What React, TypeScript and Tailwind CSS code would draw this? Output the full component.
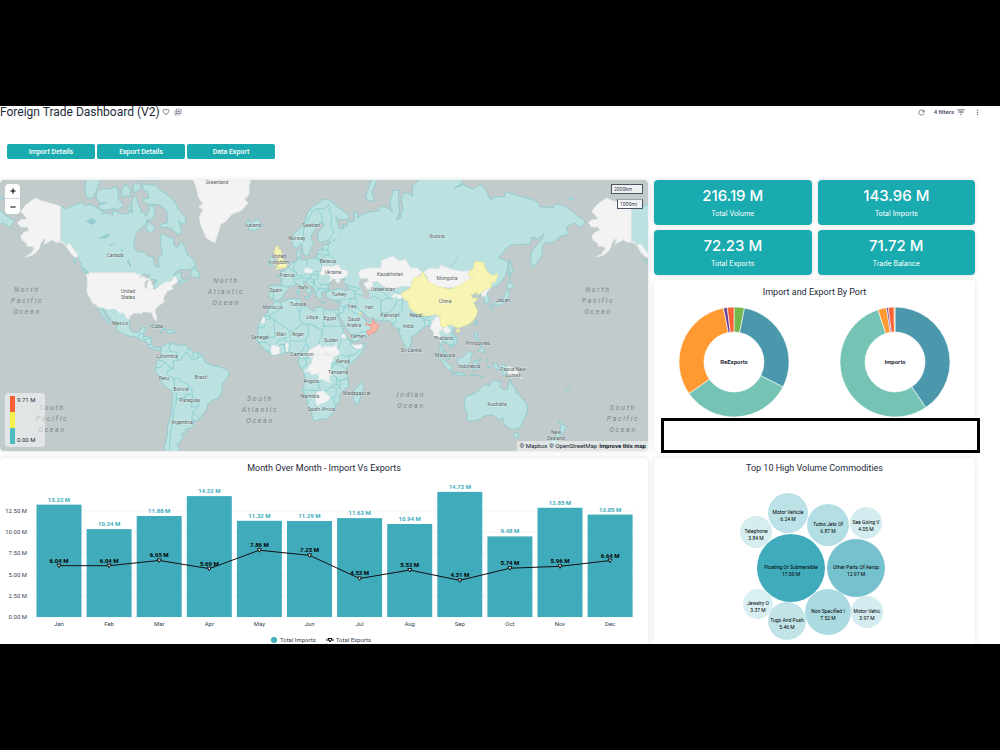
import { FaMinus, FaPlus } from "react-icons/fa"
import {
  MdFavoriteBorder,
  MdFilterList,
  MdMoreVert,
  MdOutlineLibraryAdd,
  MdRefresh,
} from "react-icons/md"

/* ---------- World map ---------- */

const WORLD_WIDTH = 571
const LON_ZERO_X = 284
const EQUATOR_Y = 182

// Web Mercator, "lon,lat lon,lat ..." -> svg path
function toPath(coords: string, close = true) {
  const points = coords.split(" ").map((pair) => {
    const [lon, lat] = pair.split(",").map(Number)
    const x = LON_ZERO_X + (lon * WORLD_WIDTH) / 360
    const rad = (lat * Math.PI) / 180
    const y = EQUATOR_Y - (WORLD_WIDTH / (2 * Math.PI)) * Math.log(Math.tan(Math.PI / 4 + rad / 2))
    return `${x.toFixed(1)} ${y.toFixed(1)}`
  })
  return `M${points.join("L")}${close ? "Z" : ""}`
}

const land = [
  // Canada
  "-141,69.6 -137,69 -134,69.6 -130,70 -128,70.5 -125,69.5 -124,70 -121,69.8 -117,69 -114,68.3 -115,67.9 -110,68 -108,67.5 -108,68.6 -104,68 -101,67.8 -98,67.8 -97,68.5 -95.5,68 -96,70 -95,71.8 -93,71.5 -92,70 -90,69 -90.5,68.5 -88,68 -87,67.3 -85,68.8 -85,69.7 -82,69.6 -81.3,68.5 -82.5,67 -84,66.3 -86.5,66.4 -87,65.3 -90,64.2 -93,63 -94,61 -94.7,59.5 -94.7,58.5 -92.5,57 -88.5,56.7 -85,55.3 -82.3,55 -82,53 -80.5,51.3 -79,51.2 -78.8,52.5 -79.5,54.5 -77,56 -76.7,57.5 -78.3,59 -77.5,60.5 -78,62.4 -75,62.3 -72,61.5 -69.6,61 -69.5,59 -67,58.4 -65.5,60 -64.3,60.3 -62.5,58.3 -61.5,57 -61,55.8 -58,54.7 -56,53 -56,51.6 -59,50.4 -62,50.2 -66,50.2 -68,49.3 -70,47.5 -66.5,49.1 -64.3,49 -65,47.8 -64.8,46.5 -63,45.8 -61.3,45.9 -60,46.8 -60,45.9 -63.5,44.6 -65.8,43.5 -66.2,44.3 -64.5,45.5 -67,45.2 -67.8,47 -69.2,47.4 -71,45.3 -74.7,45 -76.5,44.1 -79,43.4 -79,42.8 -82.5,41.8 -82.4,43 -81.6,43.6 -81.7,45.2 -80,44.6 -80.5,45.8 -84,46.2 -84.8,46.8 -85,47.9 -88.4,48.4 -89.6,48 -93,48.6 -95.1,49.3 -95.2,49 -123,49 -125,50.2 -127.5,51.5 -128,53 -130,54.5 -130,55.9 -132,57 -134,59 -135.5,59.7 -137.5,58.9 -139,60.1 -141,60.3",
  "-125,72 -123,71.2 -120,71.5 -117.5,73.5 -115,75.2 -124,75.2 -125.5,73.5",
  "-118.5,71.5 -116,70.2 -112,70.4 -117,69.7 -116,68.9 -113,68.6 -108,69 -104,68.9 -101,69.8 -104.5,71 -104.5,72.5 -106,73.5 -110,73 -114,73.2 -118,72.5",
  "-102,71.4 -99,71.8 -97,71.5 -97,73.2 -100,73.9 -102.5,72.8",
  "-95,72.3 -93,72.6 -90.2,73.2 -91,74 -95,74",
  "-99,69 -97,69.8 -96,69 -98,68.6",
  "-89,73.9 -81,73.7 -78,72.8 -75,72.3 -71,71.3 -68,70 -66.5,68.7 -62,67 -62,65.9 -64.5,65.2 -66.5,66.2 -65,64.5 -64.8,62.8 -66.5,62.3 -71.5,64.2 -75,64.4 -78,64.3 -77.5,65.3 -73.8,65.5 -73,67.5 -74,68.5 -77,69.5 -79.5,70 -85,70 -89,70.5 -88.5,71.2 -85,71.3 -86,72.5 -89,73",
  "-86,65.9 -84,65.5 -81,64 -84,62.9 -87,63.6",
  "-92,74.7 -80,74.6 -80,76 -92,76",
  "-110,74.9 -104,75 -104,76 -110,76",
  "-59.3,47.7 -57.5,50.5 -55.6,51.5 -55.5,50 -53.5,49 -53,46.8 -55.8,47",
  "-128,50.8 -125,49.8 -123.5,48.4 -126,49.2",
  "-133,54 -131.6,54 -131.5,52.5",
  // Mexico and Central America
  "-117.1,32.6 -114.8,32.5 -111,31.3 -106.5,31.8 -104.7,30.2 -103.2,29 -101.5,29.8 -99.3,26.7 -97.2,26 -97.8,22.5 -97.2,20.5 -95.8,18.9 -94.4,18.2 -92,18.6 -90.6,19.6 -90.3,21 -87,21.5 -87.5,19.5 -88.2,18 -88.6,15.9 -86,15.9 -83.3,15 -83.6,12.5 -83.7,11 -82,9 -79.8,9.5 -77.5,8.5 -78,7.4 -80.3,7.4 -81,8 -83,8.3 -85.7,10 -86,11.5 -87.6,13 -90,13.7 -92.3,14.6 -94.5,16.2 -96.5,15.7 -99.5,16.7 -102,18 -104.5,19.2 -105.6,20.5 -105.4,22 -106.8,23.8 -109,25.6 -109.8,27 -112,28.8 -113.1,31.2 -114.8,31.7 -113,28.8 -111,26 -109.5,23.3 -110,22.9 -112,24.8 -112.2,26 -114,27 -115,28 -115.8,30.2",
  "-84.8,22 -82,23.1 -77.5,21.5 -74.3,20.2 -77.5,19.9 -78.3,20.8 -82,22.5",
  "-74.3,18.4 -72.8,19.9 -69,19.3 -68.5,18.4 -71.5,17.8",
  "-78.3,18.4 -76.3,18.1 -77.5,17.8",
  // South America
  "-77.5,8.5 -75.5,10.7 -74.8,11.1 -72,12 -71.5,10.9 -70,12 -68,10.6 -62,10.7 -61,9.5 -60,8.5 -57.5,6.3 -54,5.9 -51.7,4.2 -50,1.2 -50,0 -48,-1 -44.5,-2.4 -41.5,-2.9 -38.5,-3.8 -35.5,-5.3 -34.8,-7.5 -35.3,-9.3 -37.2,-11.5 -38.8,-13 -39,-17 -40,-20 -41,-22 -44.5,-23.1 -48,-25.5 -48.7,-28.4 -51,-31 -53.5,-34 -55,-34.8 -58,-34.2 -57,-36.3 -58,-38.2 -62,-39 -62.2,-40.8 -65,-41 -63.7,-42.6 -65.3,-44.5 -67.5,-46.2 -65.8,-47.8 -69,-51 -74,-51 -75.5,-47 -73.5,-42 -73.5,-38 -71.5,-32.5 -70.5,-26 -70.2,-19 -71.5,-17.5 -75.8,-14.8 -77.2,-12 -79,-8.3 -81.2,-6 -80.2,-3.3 -80.9,-2 -80,0.5 -78.8,1.7 -77.2,4 -77.5,6.7",
  // Iceland, Ireland
  "-24,65.6 -22.5,66.4 -22,65.6 -20.5,65.8 -16,66.5 -13.7,65 -15,64.3 -18.7,63.4 -22.6,63.9 -21.8,64.5",
  "-10,52 -6.4,52.2 -6,54 -7.5,55.3 -10,54",
  // Eurasia
  "-9.3,38.7 -8.8,41.8 -9.2,43.2 -3.8,43.5 -1.6,43.4 -1.2,46 -2.5,47.3 -4.6,48 -1.6,48.7 -1.6,49.7 0.2,49.5 1.6,50.6 3.5,51.5 4.7,53 7,53.5 8.7,53.9 8.2,55.5 8.2,57 10.5,57.7 10.3,56.2 10,54.5 11,54.1 14,54 18.5,54.7 21,55.3 21,56.8 22.5,57.7 24.3,57.2 24,58.8 28,59.5 30,59.9 28,60.6 23,59.9 21.4,60.8 21.5,63 25.2,65 24,65.8 22,65.6 21,64.6 17.5,62.3 17.2,60.8 18.8,60 16.5,57.5 15.8,56.1 14.2,55.4 12.8,55.5 11.2,58.8 10.5,59.3 8,58.1 5.6,58.8 5,61 6,62.5 10,64 13,66 15,68.2 19,69.8 21,70 24,71 28,71 31,70.3 33,69.5 37,68.7 41,67.5 41,66.5 35,66.4 32.5,67 34.5,65 35,64 38,64 37,65.2 40,64.6 40.5,66 44,66 44.5,68.3 43.5,68.6 46.5,68 46,66.8 50,67.8 54,68.3 60,68.6 61,69.7 65,69.2 68.5,68.3 67,69.7 67,71 69,72.8 72.5,72.8 72,71 73,68.5 71,66.3 73.5,66.8 74,68.2 75,69 74,71 75,72.2 78,72.3 81,71.7 81,73.5 87,75.2 98,76 113,76 112,74 107,73.2 113,73.8 119,73 124,73.8 127,73 130,71 133,71.5 139,71.6 140,72.5 150,71.5 159,70.8 161,69.5 170,69.2 171,70 176,69.8 180,68.9 185,67.3 190,66 187,64.4 183,65.5 180,65 178,64.5 179.5,62.5 174,61.8 170,60 165,60 163,58.7 162.5,57 163,56 160,53.2 156.8,51 155.6,54 156,57 160,59.5 163,61.5 164,62.6 160,61 156.5,61.7 155,59.3 148,59.4 142,59 135.2,54.8 139,54 141.3,53 140.5,50 140,48 135.5,43.8 133,42.8 130.7,42.3 127.5,40 129.4,37 129,35.2 126.5,34.4 126.5,37 125,38 125,39.8 121.3,39 122,40.5 119,39.2 117.8,38.7 119,37.3 122.5,37.2 119.5,35 121,32.5 121.8,31 121.5,28.5 119.5,25.5 117,23.5 113.5,22.2 110.3,21 108,21.6 106,19.5 106.5,17.8 109,14.5 109,11.7 106.8,10.5 105,8.7 104.8,10.4 102.8,11.5 101,12.8 100,13.4 99.2,10.5 100.5,7.2 102.5,6 103.5,3.5 104.1,1.4 101.3,3 100.3,6 98.3,8 98.5,11 97.6,16.3 95.3,15.8 94.2,16.2 94.5,18.3 92.3,20.8 91.8,22.5 89,21.8 87,21 86.5,20 82.3,16.7 80.2,15.5 80.2,13 79.8,10.3 78,8.3 77.5,8 76.3,10 74.8,13 73,17.5 72.7,20.8 70.5,20.8 69,22.3 68.3,23.6 66.6,25.2 61.7,25.1 57.3,25.8 56.5,27 54.7,26.5 51.5,27.8 50,30.2 48,30 48.5,28.3 50,26.6 51.3,26 51.5,24.5 54,24.1 56.2,26 56.8,24.3 59.8,22.5 57.8,19 55.2,17.5 52,15.6 45,12.8 43.4,12.8 42.7,16.4 39,21 37,24.8 34.6,28 35,29.5 34.2,31.3 35.5,34 36,36.3 34,36.3 32,36.1 30.5,36.7 28,36.8 26.7,38.4 26.3,40 29,41 31.3,41.3 35,42 38.5,41 41.5,41.5 39,44 37.5,45 38.5,46.5 35,46.2 35.2,45.2 33.5,44.5 33,46 30.8,46.4 28.7,44.2 27.7,42.5 28.7,41.2 26,40.8 23.5,40.3 24,38 22.8,36.5 21.3,37.5 19.4,40.5 19.5,41.8 16,43.4 13.7,45.2 12.3,45.3 12.5,44 14,42.5 16,41.8 18.4,40.1 16.9,40.4 16.5,38.9 15.8,38 15.6,40 12.3,41.7 10.4,43 8.8,44.4 6,43.1 3.2,43.2 3.1,41.8 -0.3,39.3 -0.6,37.7 -2.2,36.8 -5.5,36 -6.5,37 -8.9,37",
  "51.5,71.5 53,70.8 57,70.7 55.5,72.5 60,75.5 56,75.2 53,73",
  "178.5,71 181,71.5 183,71.2 180,70.9",
  "142,54.2 143.2,52 144.5,49 143,49.3 142.8,47 142,46 142,50",
  "131,34.3 135.5,35.7 138.5,37.5 140,40.5 141.5,41.3 142,39.5 140.8,36 138.5,34.7 135.8,33.6 132.5,34.2",
  "140.2,42 141.7,45.4 145.3,43.3 143,42",
  "130,33.5 131.8,33.5 131,31.2 130,32",
  "12.6,38 15.5,38.2 15,36.8",
  "8.4,41 9.5,43 9.7,41 9.5,39.2 8.4,39",
  "23.6,35.4 26.3,35.2 24,35",
  "32.4,35 34.3,35.6 33,34.6",
  "80,9.7 81.8,7.5 80.5,6 79.8,8",
  "121,25 122,25 120.8,22",
  // Africa
  "-5.9,35.8 -2,35.1 3,36.9 10,37.3 11,35.5 10,34 15,32.4 19,30.3 20,32.5 23,32.6 29,30.9 32.5,31.2 34.2,31.3 34.9,29.5 34.2,27.9 32.7,29.8 33.7,27.3 35.5,24 37.2,21 37.4,18.7 39.5,15.5 43,12.5 43.2,11.5 45,10.5 51.2,11.9 50.5,9 47.5,4 43.5,0.5 40,-2.7 39,-5.5 39.5,-8.5 40.5,-11 40.7,-15 36.5,-18.5 34.8,-20 35.5,-23.5 32.8,-26 32.5,-28.5 30.5,-31 27,-33.7 22,-34.1 20,-34.8 18.4,-34 17,-29.5 15,-26.5 14.5,-22.7 11.8,-17.5 13.8,-11 12.3,-6 9,-1 9.7,4 8.5,4.6 6,4.3 4.3,6.3 1,6 -2,4.8 -7.5,4.4 -11,6.7 -13.3,9 -15,11 -16.8,13.2 -17.4,14.7 -16.3,17 -16.3,19.5 -17,21 -14.5,26 -13,27.8 -10,29.5 -9.8,31.5 -8,33.4 -6.5,34.5",
  "49.3,-12 50.5,-15.5 49,-19 47,-25 45,-25.5 43.5,-22.5 44.5,-19.5 44,-17 46.5,-15.7",
  // South-east Asia
  "120.5,18.5 122.2,18.4 121.5,15.5 124,13 121,13.8 120,16",
  "122,7 125.5,9.7 126.3,7 125.4,5.8",
  "123,10.8 125,12 124,10",
  "109,1.5 111.5,2.5 115,5 117,7 119,5.2 117.8,3 118,1 116.3,-1.5 116,-4 112,-3.3 110,-1.3",
  "95.3,5.6 98,4 103.5,-1 106,-3 105.8,-5.8 102.3,-4 98.8,1.7",
  "105.2,-6.8 108.5,-6.8 111,-6.5 114.4,-7.7 114.3,-8.6 108,-7.8",
  "119.5,-5.5 119,-2.5 120,1 124.8,1.5 121,0.4 121.5,-1 123.3,-1 121.8,-2 122.5,-4.5 121,-2.8 120.3,-5.5",
  "117,-8.4 122.5,-8.3 119,-8.9",
  "124,-10 127,-8.5 124.5,-9.2",
  "128,2 128.7,0.5 127.8,-0.5",
  "128,-3 130.5,-3.2 128.5,-3.4",
  "131,-0.8 134,-0.9 135,-3.3 137.8,-1.6 141,-2.6 141,-9.1 138,-8.3 138,-5.5 133,-4 132.5,-2.8",
  // Oceania
  "114,-22 113.5,-26 115,-30 115.7,-32 115.1,-34.3 118,-35 123.5,-33.9 126,-32.3 131,-31.5 134,-32.8 135.7,-34.8 138,-32.8 138.2,-35.5 140,-37.8 143.5,-38.7 146.4,-39 150,-37.5 151,-34 153,-31 153.5,-28 153,-25.5 150.8,-23.3 149,-20.8 146.3,-18.9 145.3,-15.5 143.8,-14.4 142.5,-10.8 141.6,-13.5 141,-17.2 139.5,-17.5 136,-15.5 136.9,-12.2 132.6,-11.4 130.7,-12.5 129.7,-15 127,-14 124.3,-16 122.2,-18 119,-20 116,-20.8",
  "144.8,-40.8 148.3,-41 147,-43.5 145.5,-42.8",
  "173,-34.6 175.5,-36.6 178.4,-37.7 177,-39.5 175.3,-41.5 173.9,-39.3 174.8,-37.5",
  "172.7,-40.6 174.2,-41.7 172.8,-43.8 170.5,-45.9 168.5,-46.6 166.6,-45.9 170.8,-43",
  "177.5,-17.5 179,-17 181,-16.2 178.5,-18.2",
]

// Countries without trade data
const noData = [
  // Alaska
  "-141,69.6 -145,70 -150,70.5 -154,70.9 -156.6,71.3 -160,70.6 -163,69.8 -166,68.4 -164,67.6 -162,66.5 -166,66.4 -168,65.6 -166,64.5 -161.5,64.5 -161,63.5 -164,63 -166,61.8 -165,60.6 -162.5,59.8 -162,58.7 -158.5,58.7 -157.5,57.8 -160,56 -163.5,55 -159,55.6 -156,56.8 -154,58.2 -153.5,59.5 -151.8,60.8 -150,61.2 -151.5,59.3 -149,60 -146,60.8 -144,60 -141,60 -139,59.6 -136.8,58.3 -134.5,56.4 -132,55 -130.2,55 -130,56 -132,57.2 -134,59 -135.5,59.7 -137.5,58.9 -139,60.2 -141,60.3",
  // United States
  "-123,49 -95.2,49 -95.1,49.3 -93,48.6 -89.6,48 -92,46.7 -88,47.3 -87.5,46.5 -84.6,46.5 -84,46 -87,45.6 -88,44.3 -87.7,42 -86.3,42 -86.4,43.8 -85,45.6 -83.5,45.2 -83.5,44 -82.4,43 -83.2,42 -81.5,41.5 -79,42.7 -79,43.3 -76.5,44 -74.7,45 -71,45.3 -69.2,47.4 -67.8,47 -67,44.9 -70,43.7 -70.8,42.5 -70,41.8 -74,40.7 -74.3,39.5 -75.5,38.5 -76,37 -75.6,35.3 -77.5,34.3 -79,33.3 -81.2,31.6 -81.2,29.5 -80.1,27 -80.4,25.3 -81.7,26 -82.7,28 -83.8,30 -85.5,29.8 -88.5,30.3 -89.5,29.2 -91.5,29.5 -94.5,29.5 -97.2,27.8 -97.2,26 -99.3,26.7 -101.5,29.8 -103.2,29 -104.7,30.2 -106.5,31.8 -111,31.3 -114.8,32.5 -117.1,32.6 -118.5,34 -120.6,34.6 -122,36.8 -123.8,39.3 -124.3,41 -124,44 -124,46.5 -124.6,48.3 -123,48.3",
  // Greenland
  "-57,75.8 -57,74.5 -55,73 -54,71.5 -51,70 -54,69.5 -51,68.8 -53.5,67 -52.5,65 -51,63.5 -49,61.3 -46,60.5 -43.5,59.9 -42.5,61.5 -41,63.5 -40,65.2 -37,65.8 -33,67.7 -27,68.6 -22.5,70.3 -25,71 -22,72 -22,73.5 -20,75.8",
  // Africa
  "12.5,-5.9 16.5,-5.9 17,-8 21.8,-7.3 22,-11 24,-11 27,-12 29.5,-13.3 29.5,-12.2 28.4,-12 28.7,-8.5 30.5,-8.3 29.4,-6 29.2,-3 29.6,-1 31,2 30.8,3.5 28,4.4 25,5 22.5,4.1 19,5 18.5,3.5 17.5,-0.5 16,-2.3 14.5,-4.9",
  "14.5,5 16,7.5 19,9 22.5,11 24,8.7 27.4,5 25,5 22.5,4.1 19,5 18.5,3.5 16,3",
  "24,8.7 26,10 29,9.5 32,10 33,12 33,9.5 34,8 35,5.5 34,4.2 30.8,3.5 27.4,5",
  "20,-22 21,-18.3 25,-17.8 29.3,-22.2 26,-24.7 23,-25.3 20.5,-26.8 20,-25",
  "-7.5,4.4 -3.1,5.1 -2.7,9.5 -6,10.4 -8.2,10 -8.4,7.5",
  "43.3,11.4 45,10.5 49,11.3 49,9 47,8 44,9",
  "1,11 2.3,12.3 3,11 2.4,6.4 1.6,6.4",
  "-13,27.7 -12,26 -12,23.5 -14.5,24",
  "36.5,17 38,17.5 39.5,15 36.5,14.6",
  // Europe
  "22.5,48.3 24,50.5 23.7,51.6 31,51.5 33.8,52.3 36,50.4 40,49.6 39.8,47.8 38.2,47.1 35,46.2 35.3,45.3 33.6,44.5 32.5,45.4 33.2,46.1 30.8,46.4 29.6,45.4 28.3,45.6 29.8,46.5 28.3,48.2 26.5,48.3 24.5,47.9",
  "12.3,50.3 15,51 18.5,49.8 16.5,48.8 13.5,48.8",
  // Asia
  "49,46.5 47,48 48,50 54.5,51 61,50.8 61.5,53.8 69,55.3 71,54.2 73.5,53.6 76.5,54.2 80,50.8 83.5,51 87.3,49.1 85.5,48.3 85.5,47 83,47.2 82.3,45.4 80,45 80.5,42.8 77,43 74,43.2 71,42.5 69,41.2 66,42 62,43.5 58.5,45.5 56,45 56,41.3 54,42 52.5,41.8 50.3,44.3 53,45.2 53,46.6",
  "87.8,49.2 92,50.8 98,50.5 98.5,52 102,51.3 106,50.3 112,49.5 116.5,49.8 116,47.8 119.8,46.8 115,45.4 111.5,43.5 107,42.4 100,42.6 96.5,42.8 91,45.1 90.8,47",
  "68,38.5 70,39.5 73.5,39 75,37.4 71.5,36.8 71,38.3 69,37.2",
  "124.3,39.9 126.8,41.7 130.5,42.3 127.5,39.8 127.5,38.6 125,38",
  "97.5,28 98.6,25 99,22.2 100.2,20.3 97.5,18.5 98.5,16.3 98.8,12 98,14 97.6,16.3 95.3,15.8 94.2,16.2 94.5,18.3 92.3,20.8 93.5,24 95,26.5",
  "102.2,22.4 104.5,20 105,18.5 104,18 101.3,17.8 100.2,20.3",
  "141,-2.6 145,-4.3 147.8,-6 147,-6.8 150.5,-10.5 146,-8.7 143.5,-8.5 141,-9.1",
]

const mediumVolume = [
  // China, Hainan
  "73.8,39.6 80.2,42.2 80.5,45 83,47.2 85.5,47.1 87.5,49.2 91,45.2 96.5,42.8 105,41.6 111.5,43.5 115,45.4 119.8,46.8 116,47.8 117,49.6 119.5,50.5 120,53 121,53.4 125.5,53 127.5,49.8 131,47.7 135,48.4 133.2,45 131,44.8 130.6,42.5 126.8,41.7 124.2,39.9 121.5,38.9 122,40.5 119,39.2 117.8,38.7 119,37.3 122.5,37.2 119.5,35 121,32.5 121.8,31 121.5,28.5 119.5,25.5 117,23.5 113.5,22.2 110.3,21 108,21.6 105.5,23 102.2,22.4 101.5,21.3 99,22.2 98.5,25 98.5,27.8 95,29 91,28 88,28 86,28 82,30.2 79,32.5 78.5,35.5 76,36.7",
  "109,20 111,20 110,18.3 108.7,19",
  // United Kingdom
  "-5.5,50 -3,50.7 1.3,51.2 1.6,52.7 0.3,53 -1.5,54.8 -2,57.5 -4,57.7 -3,58.6 -5,58.6 -6,56.8 -4.8,55 -3,54.3 -4.5,53.2 -5.2,51.9 -3,51.4",
  "47.5,29.8 48.3,29.8 48.3,28.7 47.5,28.9",
]

const oman = "53,16.6 55.2,17.5 57.8,19 59.8,22.5 56.8,24.3 56,26 55.8,24 55.4,22.7 51.5,23.5 51.6,22.8 55,22.3 55,20 52,19"

const water = [
  "47,44.5 49,46.5 53,46.6 53,45.2 51,44.5 53,42 53.8,40 54,37 51,36.8 49,38 49.5,40.4 47.5,42.8",
]

const lakes = [
  "-125,66 -121,66.8 -118,66 -121,65",
  "-117,61.2 -113,62.3 -109,62.8 -112,61.2",
  "-111,59.2 -106,59.4 -109,58.8",
  "-103,57.5 -101.5,56.5 -102,58",
  "-99,53.5 -97,51 -96.5,52 -98,54",
  "104,51.5 107,52.8 109.8,55.5 109,54 106,51.8",
  "31,61 32.5,61 31.5,60",
  "35,62 36,61.2 35.5,61",
  "32,0.5 34,0.2 33,-2.2",
]

const borders = [
  // Americas
  "-72,12 -72.5,9 -72,7 -67.5,6 -67,1.2 -69.8,1 -69.5,-1 -70,-4.2 -73,-2.5 -75,0 -78.8,1.3",
  "-75,0 -78,-3.5 -80.2,-3.5",
  "-70,-4.2 -73,-5 -73.5,-7.5 -72.5,-9.5 -70.5,-9.5 -69.5,-11 -69,-15 -69.5,-17.5 -68,-19 -67.8,-22.8 -68.5,-26 -70,-31 -70,-35 -71,-38 -72,-44 -72,-50",
  "-69.5,-11 -66,-9.8 -65,-12 -60.5,-13.7 -60,-16.2 -58,-17 -57.8,-19.5 -57.8,-22 -55.6,-22.3 -54.3,-24 -54.3,-25.5 -53.8,-27.2 -57.6,-30.2 -56,-31 -53.4,-33.7",
  "-67.8,-22.8 -64,-22 -62.5,-22 -62,-20 -58,-19.8",
  "-62.5,-22 -60,-24 -57.7,-25.3 -58.6,-27.2 -55.8,-27.3 -54.3,-25.5",
  "-57.6,-30.2 -58.2,-34",
  "-60,8.5 -61,6 -60,4.5 -58,1.5 -54.5,2.3 -51.7,4.2",
  "-57.2,6 -57.5,3.5 -56.5,2",
  "-54,5.8 -54.5,2.3",
  "-61,6 -64,4 -65,1 -67,1.2",
  "-92.3,14.6 -91,17.5 -89,17.8 -88.2,18",
  "-89,15.8 -88,14 -83.5,15",
  "-85.7,11 -83.7,11",
  // Africa
  "-2,35 -1.5,32.5 -5,30 -8.7,28.7 -8.7,27.3 -5,25 1.5,21 3.3,19 5.8,19.4 11.9,23.5 9.8,26.5 10,30 8,33 8.3,36.9",
  "-13,27.7 -8.7,27.7 -8.7,26 -12,26 -12,23.5 -13,21.3 -17,21",
  "-5,25 -6.5,25 -5.5,15.5 -11.5,15.5 -12,14.8 -16.3,16.2",
  "10,30.3 11.5,33",
  "11.9,23.5 15,23 16,23.5 24,19.5 24,20 25,22 25,31.7",
  "25,22 37,22",
  "15,23 15.5,17 13.5,13.7 9,12.8 4,13.5 3.6,11.7 2.7,6.3",
  "24,19.5 24,15.7 22,13 22.5,11",
  "13.5,13.7 14,11.5 11.5,7 8.6,4.8",
  "14,11.5 15.5,10 14.5,5 16,2 13.3,2.2 9.8,2.2",
  "3.3,19 4,16.5 3.6,15.5 0.2,15 -2,14.2 -5.5,11.5 -6,10.4",
  "0.2,15 2.3,12.3 1,11 -2.7,11 -2.7,9.5",
  "0,11 1,6",
  "-16.5,12.5 -11.5,12.3 -8.5,10 -8.4,7.5 -11,6.8",
  "-12,14.8 -11.5,12.3",
  "36.5,18 37,17 36.4,14.5 35,11 34,8",
  "36.4,14.5 40,14.4 42.5,12.5 42,11 43,11",
  "43,9 44,9 48,8 45,5 42,4.2 39.5,3.5 36,4.4",
  "41,4 41,-1.7",
  "30,-1.2 34,-1 37.5,-3 39.2,-4.7",
  "34,4.2 34.5,1 34,-1",
  "30.5,-8.3 33,-9.5 34.5,-11.6 40.4,-10.5",
  "29.4,-4.5 30.8,-3.3 30.5,-1.1",
  "33,-9.5 33,-14 30.2,-15 30.2,-15.7",
  "34.5,-11.6 35.8,-14.5 35,-17 34.3,-14.5 33,-14",
  "25,-17.8 27,-18 29,-15.7 30.2,-15.7 33,-16.5 32.8,-20 31.3,-22.3 29.3,-22.2",
  "31.3,-22.3 32,-26.5",
  "24,-11 22,-13 22,-16.2 23.3,-17.6",
  "11.8,-17.3 14,-17.4 23.3,-17.8 25,-17.8",
  "20,-24.8 20,-28.4 16.5,-28.6",
  "20,-26.8 20,-22 21,-22 21,-18.3",
  "13.3,2.2 14.3,-2 11,-4",
  // Europe
  "11.2,58.9 12.5,61.5 12.2,63.5 14.5,66 18,68.5 20.5,69 23.7,67.8 24.2,65.8",
  "20.5,69 25.7,69 28,70 29,69.5 28.5,68.5 30,67.5 29.5,64.5 31.5,62.8 28,60.6",
  "-8.8,41.9 -6.5,41.6 -7,38 -7.4,37.2",
  "-1.7,43.3 3.1,42.5",
  "2.5,51 6,49.5 8,49 7.5,47.6 6.2,46.3 7,44.5 7.5,43.8",
  "7,53.4 6,51 6,49.5",
  "14.2,53.9 15,51",
  "8.5,54.8 10,54.8",
  "13.5,48.7 13,47.6 7.5,47.6",
  "18.5,49.8 22.6,49.2 23.8,51 23.5,53.9 19.5,54.4",
  "13.5,48.7 17,48.2 16.5,46.8 13.5,46.6 10.5,46.8 7,45.9",
  "17,48 22,48.4 21,46.2 18.8,45.8 16.5,46.6 13.6,45.5",
  "28.5,43.8 23,43.8 21.5,45",
  "23,43.8 22.5,42 26.3,41.7 28,42",
  "19,45.8 19.2,43.5 21,42.3 22.5,42 21,41 20,39.8",
  "16,45 19,45 18.5,42.5",
  "21,56.2 26.5,55.7 28.2,56 31,54.8 32.5,53 31.5,52.2",
  "24.5,57.9 27.5,57.5",
  "28,59.4 27.7,57.3 28.2,56",
  "21,55 23,54 26.5,55.7",
  // Middle East and Asia
  "36,36 38,36.8 42.3,37.2 44.8,37.2 44.5,39.5 43.5,41 41.5,41.5",
  "40,43.5 44,42.7 48,41.8",
  "43.5,41 46.5,41",
  "44.8,39.7 48.8,38.5",
  "44.8,37.2 46,35.5 45.5,33.5 47.8,31 48.5,30",
  "42.3,37.2 41,34.4 38.8,33.4 35.7,32.7",
  "38.8,33.4 39.2,32.2 42,31.1 44.7,29.2 46.5,29.1 48.4,28.5",
  "39.2,32.2 37,31.5 38,30.5 36,29.2 35,29.4",
  "42.8,16.5 44,17.4 47,17 49,18.6 52,19 53,16.7",
  "54,37.4 57,38.2 61,36.5 61,34 60.8,31 61.8,31 61,29.5 63,27 61.7,25.1",
  "61,35.5 65,37.3 68,37 71,38.3 71.5,36.6 75,37 74.5,34 74.6,31 70.5,28 71,24.6 68.2,23.8",
  "71.5,36.5 70,33.5 69,31.7 66.3,29.8 61,29.5",
  "56,41.3 60,42 66.5,37.4",
  "69,41 73,39.5",
  "80.3,29.8 84,27.5 88,26.5 88,27.9",
  "88,26.5 89,22",
  "88.5,26 92,25.2 92.2,23",
  "88.8,27.3 92,27.2",
  "105,18.5 107.5,14.5 107,11 104.5,10.4",
  "102.5,14 107.5,14.3",
  "102.5,14 102.5,11.8",
  "100.2,6.5 102,6",
]

const placeLabels: [string, number, number][] = [
  ["Canada", 115, 75],
  ["United", 128, 111],
  ["States", 128, 117],
  ["Mexico", 120, 143],
  ["Cuba", 157, 146],
  ["Colombia", 167, 176],
  ["Peru", 164, 198],
  ["Brazil", 201, 197],
  ["Bolivia", 181, 209],
  ["Paraguay", 190, 220],
  ["Argentina", 182, 242],
  ["Iceland", 253, 45],
  ["Sweden", 311, 45],
  ["Norway", 297, 58],
  ["United", 279, 76],
  ["Kingdom", 279, 82],
  ["Bélarus", 328, 81],
  ["Ukraine", 333, 92],
  ["France", 287, 95],
  ["Spain", 276, 110],
  ["Italy", 303, 107],
  ["Turkey", 339, 114],
  ["Morocco", 273, 127],
  ["Tunisia", 298, 124],
  ["Libya", 312, 137],
  ["Egypt", 330, 138],
  ["Iraq", 352, 126],
  ["Iran", 369, 127],
  ["Saudi", 354, 139],
  ["Arabia", 354, 145],
  ["Yemen", 358, 156],
  ["Senegal", 260, 157],
  ["Mali", 281, 154],
  ["Niger", 298, 154],
  ["Sudan", 331, 160],
  ["Cameroon", 302, 174],
  ["Kenya", 343, 181],
  ["Tanzania", 338, 192],
  ["Angola", 311, 201],
  ["Namibia", 310, 216],
  ["South Africa", 321, 229],
  ["Madagascar", 357, 213],
  ["Kazakhstan", 390, 94],
  ["Uzbekistan", 383, 109],
  ["Pakistan", 390, 135],
  ["Nepal", 416, 135],
  ["India", 408, 146],
  ["Sri Lanka", 411, 170],
  ["Russia", 437, 56],
  ["Mongolia", 447, 98],
  ["China", 445, 121],
  ["Japan", 503, 120],
  ["Thailand", 443, 158],
  ["Philippines", 478, 163],
  ["Malaysia", 445, 175],
  ["Indonesia", 469, 186],
  ["Papua New", 513, 189],
  ["Guinea", 513, 195],
  ["Australia", 497, 224],
  ["New", 556, 252],
  ["Zealand", 556, 258],
  ["Greenland", 217, 2],
]

const oceanLabels: [string[], number, number][] = [
  [["North", "Pacific", "Ocean"], 27, 112],
  [["North", "Atlantic", "Ocean"], 226, 103],
  [["South", "Atlantic", "Ocean"], 260, 221],
  [["Indian", "Ocean"], 411, 217],
  [["North", "Pacific", "Ocean"], 598, 112],
  [["South", "Pacific", "Ocean"], 52, 230],
  [["South", "Pacific", "Ocean"], 623, 230],
]

function WorldMap() {
  return (
    <svg viewBox="0 0 648 271" className="block w-full" role="img" aria-label="Trade volume by country">
      <rect width="648" height="271" fill="#c2cbcc" />
      <defs>
        <g id="world" strokeLinejoin="round" strokeWidth="0.7">
          <g fill="#bbe2e1" stroke="#7ecacd">
            {land.map((shape) => (
              <path key={shape} d={toPath(shape)} />
            ))}
          </g>
          <g fill="none" stroke="#7ac8cc">
            {borders.map((line) => (
              <path key={line} d={toPath(line, false)} />
            ))}
          </g>
          <g fill="#c2cbcc">
            {water.map((shape) => (
              <path key={shape} d={toPath(shape)} />
            ))}
          </g>
          <g fill="#93cdd0">
            {lakes.map((shape) => (
              <path key={shape} d={toPath(shape)} />
            ))}
          </g>
          <g fill="#f3f3f3">
            {noData.map((shape) => (
              <path key={shape} d={toPath(shape)} stroke="#e4e8e8" />
            ))}
          </g>
          <g fill="#f7f4b4" stroke="#eeea8e">
            {mediumVolume.map((shape) => (
              <path key={shape} d={toPath(shape)} />
            ))}
          </g>
          <path d={toPath(oman)} fill="#fbb5a5" stroke="#f98b76" />
        </g>
      </defs>
      <use href="#world" x={-WORLD_WIDTH} />
      <use href="#world" />
      <use href="#world" x={WORLD_WIDTH} />
      <g className="text-[5px]" fill="#555d5f" textAnchor="middle" stroke="#ffffff" strokeOpacity="0.4" paintOrder="stroke">
        {placeLabels.map(([name, x, y]) => (
          <text key={`${name}-${y}`} x={x} y={y + 2}>
            {name}
          </text>
        ))}
      </g>
      <g className="text-[7px] tracking-[0.24em] italic" fill="#7c8688" textAnchor="middle">
        {oceanLabels.map(([lines, x, y]) => (
          <text key={`${x}-${y}`}>
            {lines.map((line, i) => (
              <tspan key={line} x={x} y={y + i * 11}>
                {line}
              </tspan>
            ))}
          </text>
        ))}
      </g>
    </svg>
  )
}

function MapCard() {
  return (
    <section className="relative overflow-hidden rounded bg-white shadow-[0_0_5px_rgba(0,0,0,0.12)]">
      <WorldMap />

      {/* Zoom */}
      <div className="absolute top-1 left-[5px] flex w-[15px] flex-col divide-y divide-gray-300 rounded-sm bg-white text-black">
        <button aria-label="Zoom in" className="flex h-[15px] items-center justify-center">
          <FaPlus size={6} />
        </button>
        <button aria-label="Zoom out" className="flex h-[15px] items-center justify-center">
          <FaMinus size={6} />
        </button>
      </div>

      {/* Scale */}
      <div className="absolute top-1 right-[5px] flex flex-col items-end gap-[5px] text-[5px] leading-2 text-gray-700">
        <span className="w-8 border border-gray-600 bg-white/75 px-0.5">2000km</span>
        <span className="w-[26px] border border-gray-600 border-t-gray-400 bg-white/75 px-0.5">1000mi</span>
      </div>

      {/* Legend */}
      <div className="absolute bottom-1 left-[5px] flex h-[54px] w-10 gap-0.5 rounded-sm bg-white/50 px-[5px] py-[3px]">
        <div className="flex w-[5px] flex-col">
          <span className="flex-1 bg-[#fb6136]" />
          <span className="flex-1 bg-[#f6f24a]" />
          <span className="flex-1 bg-[#4cbcc3]" />
        </div>
        <div className="flex flex-col justify-between text-[6px] leading-2 whitespace-nowrap text-gray-800">
          <span>9.71 M</span>
          <span>0.00 M</span>
        </div>
      </div>

      <div className="absolute right-0 bottom-0 flex gap-0.5 bg-white/50 px-0.5 text-[6px] leading-[10px] text-gray-900">
        <a href="#mapbox">© Mapbox</a>
        <a href="#osm">© OpenStreetMap</a>
        <a href="#improve" className="font-bold">Improve this map</a>
      </div>
    </section>
  )
}

/* ---------- Totals ---------- */

const totals = [
  { value: "216.19 M", label: "Total Volume" },
  { value: "143.96 M", label: "Total Imports" },
  { value: "72.23 M", label: "Total Exports" },
  { value: "71.72 M", label: "Trade Balance" },
]

function Totals() {
  return (
    <div className="grid grid-cols-2 gap-x-1.5 gap-y-[5px]">
      {totals.map((total) => (
        <div
          key={total.label}
          className="flex h-[45px] flex-col items-center justify-center rounded-sm bg-[#1aabb0] pt-[3px] font-[Inter,sans-serif] text-white shadow-[0_0_4px_rgba(0,0,0,0.15)]"
        >
          <span className="text-[15px] leading-5 font-medium">{total.value}</span>
          <span className="text-[7px] leading-4">{total.label}</span>
        </div>
      ))}
    </div>
  )
}

/* ---------- Ports ---------- */

type Slice = { color: string; to: number }

// Slice ends, in degrees clockwise from the top
const reExports: Slice[] = [
  { color: "#72b84d", to: 11 },
  { color: "#4b98ac", to: 117 },
  { color: "#75c3b4", to: 235 },
  { color: "#ff9a33", to: 349 },
  { color: "#6d4594", to: 353 },
  { color: "#fb6136", to: 360 },
]

const imports: Slice[] = [
  { color: "#4b98ac", to: 146 },
  { color: "#75c3b4", to: 342 },
  { color: "#ff9a33", to: 351 },
  { color: "#6d4594", to: 353 },
  { color: "#fb6136", to: 359 },
  { color: "#ff9a33", to: 360 },
]

function slicePath(from: number, to: number) {
  const point = (deg: number, r: number) => {
    const rad = (deg * Math.PI) / 180
    return `${(55 + r * Math.sin(rad)).toFixed(2)} ${(55 - r * Math.cos(rad)).toFixed(2)}`
  }
  const large = to - from > 180 ? 1 : 0
  return `M${point(from, 55)}A55 55 0 ${large} 1 ${point(to, 55)}L${point(to, 30)}A30 30 0 ${large} 0 ${point(from, 30)}Z`
}

function Donut({ label, slices }: { label: string; slices: Slice[] }) {
  return (
    <div className="flex flex-1 justify-center">
      <svg viewBox="0 0 110 110" className="size-[110px]" role="img" aria-label={label}>
        {slices.map((slice, i) => (
          <path
            key={slice.to}
            d={slicePath(i === 0 ? 0 : slices[i - 1].to, slice.to)}
            fill={slice.color}
            stroke="#ffffff"
            strokeWidth="0.6"
          />
        ))}
        <text x="55" y="57" textAnchor="middle" className="fill-gray-800 text-[6px] font-bold">
          {label}
        </text>
      </svg>
    </div>
  )
}

function PortCard() {
  return (
    <section className="relative flex-1 rounded bg-white pt-1.5 shadow-[0_0_5px_rgba(0,0,0,0.12)]">
      <CardTitle>Import and Export By Port</CardTitle>
      <div className="mt-[9px] flex">
        <Donut label="ReExports" slices={reExports} />
        <Donut label="Imports" slices={imports} />
      </div>
      <div className="absolute -right-[5px] -bottom-0.5 left-[7px] h-[35px] border-3 border-black bg-white" />
    </section>
  )
}

/* ---------- Month over month ---------- */

const months = [
  { name: "Jan", imports: 13.22, exports: 6.04 },
  { name: "Feb", imports: 10.34, exports: 6.04 },
  { name: "Mar", imports: 11.88, exports: 6.65 },
  { name: "Apr", imports: 14.22, exports: 5.69 },
  { name: "May", imports: 11.32, exports: 7.86 },
  { name: "Jun", imports: 11.29, exports: 7.25 },
  { name: "Jul", imports: 11.63, exports: 4.53 },
  { name: "Aug", imports: 10.94, exports: 5.52 },
  { name: "Sep", imports: 14.72, exports: 4.31 },
  { name: "Oct", imports: 9.48, exports: 5.74 },
  { name: "Nov", imports: 12.85, exports: 5.96 },
  { name: "Dec", imports: 12.05, exports: 6.64 },
]

const ticks = [0, 2.5, 5, 7.5, 10, 12.5]
const BASELINE = 143
const barX = (i: number) => 59 + i * 50.1
const valueY = (value: number) => BASELINE - value * 8.5

function MonthChart() {
  const line = months.map((month, i) => `${barX(i)},${valueY(month.exports)}`).join(" ")

  return (
    <svg viewBox="0 0 648 162" className="block w-full text-[6px]" role="img" aria-label="Imports and exports by month">
      {ticks.map((tick) => (
        <g key={tick}>
          <line x1="34" x2="635" y1={valueY(tick)} y2={valueY(tick)} stroke="#e6e8ea" strokeWidth="0.5" />
          <text x="27" y={valueY(tick) + 2} textAnchor="end" className="fill-gray-700">
            {tick.toFixed(2)} M
          </text>
        </g>
      ))}
      {months.map((month, i) => (
        <g key={month.name} textAnchor="middle">
          <rect
            x={barX(i) - 22.5}
            y={valueY(month.imports)}
            width="45"
            height={month.imports * 8.5}
            fill="#40abbb"
          />
          <text x={barX(i)} y={valueY(month.imports) - 3} className="fill-[#40abbb] font-bold">
            {month.imports.toFixed(2)} M
          </text>
          <text x={barX(i)} y={BASELINE + 9} className="fill-gray-700">
            {month.name}
          </text>
        </g>
      ))}
      <polyline points={line} fill="none" stroke="#111111" />
      {months.map((month, i) => (
        <g key={month.name} transform={`translate(${barX(i)} ${valueY(month.exports)})`}>
          <path d="M-2 -1.5H2L0 2Z" fill="#ffffff" stroke="#111111" />
          <text y="-3" textAnchor="middle" className="fill-black font-bold">
            {month.exports.toFixed(2)} M
          </text>
        </g>
      ))}
    </svg>
  )
}

function MonthCard() {
  return (
    <section className="overflow-hidden rounded-t bg-white pt-1 shadow-[0_0_5px_rgba(0,0,0,0.12)]">
      <CardTitle>Month Over Month - Import Vs Exports</CardTitle>
      <MonthChart />
      <div className="flex h-2 items-center justify-center gap-2.5 pr-1.5 text-[6px] leading-2 text-gray-700">
        <span className="flex items-center gap-[3px]">
          <span className="size-1.5 rounded-full bg-[#40abbb]" />
          Total Imports
        </span>
        <span className="flex items-center gap-0.5">
          <svg viewBox="0 0 8 6" className="h-1.5 w-2">
            <path d="M0 3H8" stroke="#111111" />
            <path d="M2 1.5H6L4 5Z" fill="#ffffff" stroke="#111111" />
          </svg>
          Total Exports
        </span>
      </div>
    </section>
  )
}

/* ---------- Commodities ---------- */

const commodities = [
  { name: "Motor Vehicle", value: "6.24 M", x: 134, y: 39, r: 20, color: "#bce2e7" },
  { name: "Turbo Jets Of", value: "6.87 M", x: 174, y: 51, r: 21, color: "#b3dfe4" },
  { name: "Sea Going V", value: "4.05 M", x: 212, y: 49, r: 16, color: "#d3ecef" },
  { name: "Telephone", value: "3.84 M", x: 102, y: 58, r: 16, color: "#d6edf0" },
  { name: "Floating Or Submersible", value: "17.50 M", x: 137, y: 94, r: 34, color: "#40abbb" },
  { name: "Other Parts Of Aerop", value: "12.97 M", x: 202, y: 94, r: 29, color: "#75c2ce" },
  { name: "Jewelry O", value: "3.37 M", x: 104, y: 130, r: 15, color: "#d9eff1" },
  { name: "Tugs And Push", value: "5.46 M", x: 133, y: 147, r: 19, color: "#c2e4e9" },
  { name: "Non Specified I", value: "7.52 M", x: 174, y: 138, r: 23, color: "#abdbe1" },
  { name: "Motor Vehic", value: "3.97 M", x: 213, y: 138, r: 16, color: "#d4ecf0" },
]

function CommodityCard() {
  return (
    <section className="overflow-hidden rounded-t bg-white pt-1 shadow-[0_0_5px_rgba(0,0,0,0.12)]">
      <CardTitle>Top 10 High Volume Commodities</CardTitle>
      <svg viewBox="0 0 321 170" className="block w-full" role="img" aria-label="Top 10 high volume commodities">
        {commodities.map((item) => (
          <g key={item.name} textAnchor="middle" className="fill-black text-[5px]">
            <circle cx={item.x} cy={item.y} r={item.r} fill={item.color} />
            <text x={item.x} y={item.y + 1}>
              {item.name}
            </text>
            <text x={item.x} y={item.y + 8}>
              {item.value}
            </text>
          </g>
        ))}
      </svg>
    </section>
  )
}

/* ---------- Page ---------- */

function CardTitle({ children }: { children: string }) {
  return <h2 className="text-center text-[9px] leading-3 text-gray-800">{children}</h2>
}

const links = ["Import Details", "Export Details", "Data Export"]

export default function App() {
  return (
    <div className="min-h-screen bg-black py-[106px] font-[Roboto,sans-serif]">
      <main className="overflow-hidden bg-white">
        <header className="flex h-3 items-center text-gray-500">
          <h1 className="text-xs leading-3 text-gray-800">Foreign Trade Dashboard (V2)</h1>
          <button aria-label="Favorite" className="ml-0.5">
            <MdFavoriteBorder size={8} />
          </button>
          <button aria-label="Add to board" className="ml-1">
            <MdOutlineLibraryAdd size={8} />
          </button>
          <div className="ml-auto flex items-center pr-[18px]">
            <button aria-label="Refresh">
              <MdRefresh size={9} />
            </button>
            <button className="ml-2 flex items-center gap-0.5 text-[6px] leading-2 font-medium text-gray-700">
              4 filters
              <MdFilterList size={10} />
            </button>
            <button aria-label="More" className="ml-[7px]">
              <MdMoreVert size={9} />
            </button>
          </div>
        </header>

        <nav className="mt-[26px] flex gap-0.5 pl-[7px]">
          {links.map((link) => (
            <button
              key={link}
              className="h-[15px] w-[88px] rounded-xs bg-[#1aabb0] text-[7px] leading-3 font-medium text-white"
            >
              {link}
            </button>
          ))}
        </nav>

        <div className="mt-[21px] grid grid-cols-[minmax(0,648fr)_minmax(0,321fr)] gap-x-1.5 gap-y-[7px] pr-[25px]">
          <MapCard />
          <div className="flex flex-col gap-[5px]">
            <Totals />
            <PortCard />
          </div>
          <MonthCard />
          <CommodityCard />
        </div>
      </main>
    </div>
  )
}
